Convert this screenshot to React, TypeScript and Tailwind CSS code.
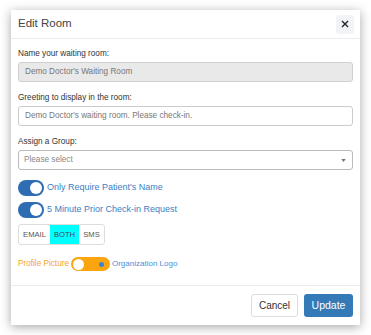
import React from "react";

export default function App() {
  return (
    <div className="w-[371px] h-[335px] bg-white pt-[10px] pl-[11px]" style={{ fontFamily: "'Liberation Sans', Arial, sans-serif" }}>
      <div className="w-[349px] h-[315px] bg-white flex flex-col shadow-[0_2px_10px_rgba(0,0,0,0.35)]">
        <div className="flex items-center justify-between h-[29px] pl-[7px] pr-[6px] border-b border-[#e9ecef]">
          <span className="text-[11.5px] text-[#444] leading-none">Edit Room</span>
          <button className="w-[18px] h-[19px] rounded-[3px] bg-[#f1f3f6] flex items-center justify-center">
            <svg width="8" height="8" viewBox="0 0 8 8"><path d="M1 1L7 7M7 1L1 7" stroke="#222" strokeWidth="1.4" /></svg>
          </button>
        </div>
        <div className="px-[7px] pt-[9px] flex flex-col flex-1">
          <div className="text-[8.2px] text-[#333] h-[11px] leading-[11px]">Name your waiting room:</div>
          <div className="mt-[3px] h-[20px] rounded-[3px] border border-[#d0d0d0] bg-[#e9e9e9] flex items-center px-[6px] text-[8.2px] text-[#777]">Demo Doctor's Waiting Room</div>
          <div className="mt-[10px] text-[8.2px] text-[#333] h-[11px] leading-[11px]">Greeting to display in the room:</div>
          <div className="mt-[3px] h-[20px] rounded-[3px] border border-[#ccc] bg-white flex items-center px-[6px] text-[8.2px] text-[#777]">Demo Doctor's waiting room. Please check-in.</div>
          <div className="mt-[10px] text-[8.2px] text-[#333] h-[11px] leading-[11px]">Assign a Group:</div>
          <div className="mt-[3px] h-[20px] rounded-[3px] border border-[#bbb] bg-white flex items-center justify-between pl-[5px] pr-[6px] text-[8.2px] text-[#888]">
            <span>Please select</span>
            <svg width="5" height="3" viewBox="0 0 6 4"><path d="M0 0H6L3 4Z" fill="#777" /></svg>
          </div>
          <div className="mt-[10px] flex items-center gap-[3px] h-[16px]">
            <div className="w-[26px] h-[16px] rounded-full bg-[#2f6db3] flex items-center justify-end pr-[2px]">
              <div className="w-[12px] h-[12px] rounded-full bg-white" />
            </div>
            <span className="text-[9px] text-[#3b7fc4]">Only Require Patient's Name</span>
          </div>
          <div className="mt-[6px] flex items-center gap-[3px] h-[16px]">
            <div className="w-[26px] h-[16px] rounded-full bg-[#2f6db3] flex items-center justify-end pr-[2px]">
              <div className="w-[12px] h-[12px] rounded-full bg-white" />
            </div>
            <span className="text-[9px] text-[#3b7fc4]">5 Minute Prior Check-in Request</span>
          </div>
          <div className="mt-[6px] flex h-[21px] w-[87px] border border-[#ddd] rounded-[3px] text-[7.6px] text-[#555] overflow-hidden">
            <div className="w-[31px] flex items-center justify-center">EMAIL</div>
            <div className="w-[29px] flex items-center justify-center bg-[#00ffff] text-[#445]">BOTH</div>
            <div className="flex-1 flex items-center justify-center">SMS</div>
          </div>
          <div className="mt-[12px] flex items-center h-[14px]">
            <span className="text-[8.2px] text-[#f5a623]">Profile Picture</span>
            <div className="ml-[2px] w-[39px] h-[14px] rounded-full bg-[#fba50f] flex items-center justify-between pl-[2px] pr-[6px]">
              <div className="w-[11px] h-[11px] rounded-full bg-white" />
              <div className="w-[5px] h-[5px] rounded-full bg-[#3b82d6]" />
            </div>
            <span className="ml-[2px] text-[8px] text-[#4a90d9]">Organization Logo</span>
          </div>
          <div className="flex-1" />
        </div>
        <div className="border-t border-[#e9ecef] h-[40px] flex items-center justify-end gap-[6px] pr-[7px]">
          <button className="h-[23px] w-[47px] rounded-[3px] border border-[#ddd] bg-white text-[10px] text-[#333]">Cancel</button>
          <button className="h-[23px] w-[49px] rounded-[3px] bg-[#337ab7] text-[10.5px] text-white">Update</button>
        </div>
      </div>
    </div>
  );
}
